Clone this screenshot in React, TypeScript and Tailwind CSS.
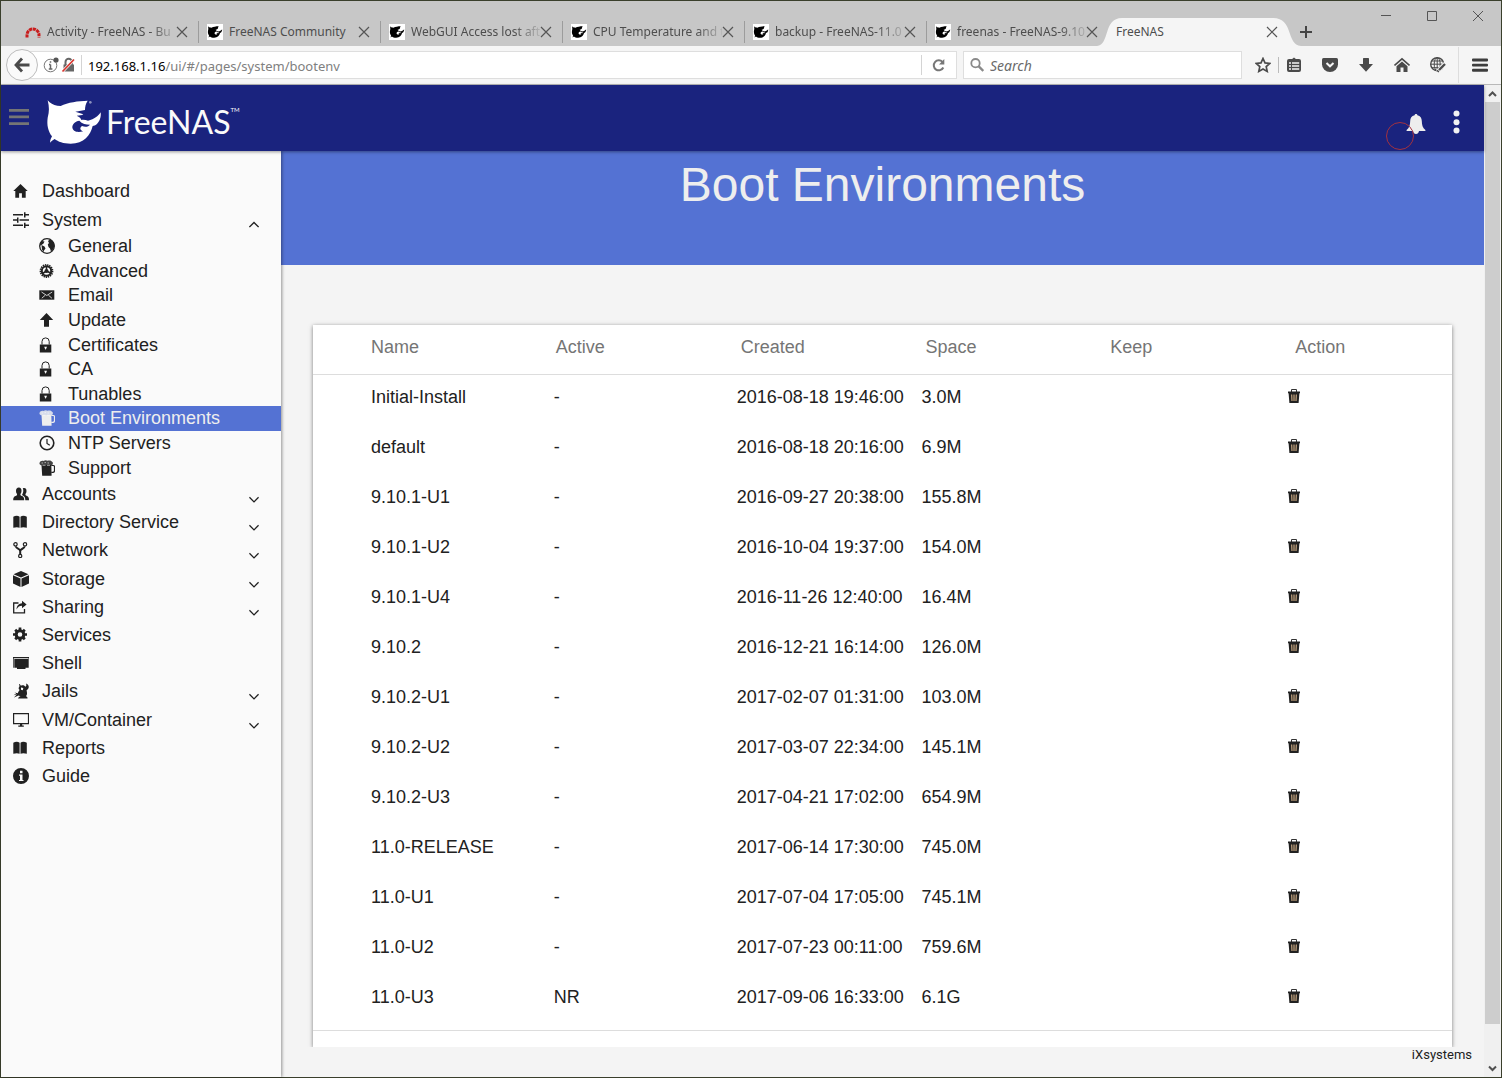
import { useState } from "react";
import type { ReactNode } from "react";
import clsx from "clsx";

interface NavItem {
  label: string;
  icon: ReactNode;
  expandable?: boolean;
}

interface BootEnv {
  name: string;
  active: string;
  created: string;
  space: string;
}

const SHARK =
  "M17 14C24 23 34 28 46 30L56 31C78 20 108 16 137 15C131 24 129 33 129 43L100 48C108 51 116 53 124 56C120 60 112 59 104 60C112 64 118 68 118 73C124 71 132 73 138 75C158 70 168 62 176 50C178 66 172 78 164 86C160 90 156 91 152 91C146 118 126 144 86 144C64 144 48 138 38 130C33 132 29 137 24 141C25 132 27 128 30 122C18 106 14 88 17 66C22 48 22 34 17 14ZM112 75C100 77 91 85 91 95C92 108 106 112 124 107C114 104 112 96 120 91C130 95 140 93 144 87C132 87 120 84 112 75Z";

function Icon({ children, className }: { children: ReactNode; className?: string }) {
  return (
    <svg viewBox="0 0 16 16" className={clsx("h-4 w-4 shrink-0", className)} fill="currentColor" aria-hidden="true">
      {children}
    </svg>
  );
}

const icons = {
  home: <path d="M7.5 1L.3 8h2v6.8h3.8v-4.600h2.800v4.600h3.800V8h2z" />,
  options: (
    <path d="M0 2h10v1.500H0zM11 .2h1.500v5.200H11zM12.300 2H16v1.500h-3.700zM0 7.300h4v1.500H0zM4 5.500h1.500v5.200H4zM6.500 7.300H16v1.500H6.500zM0 12.600h10v1.500H0zM11 10.800h1.500V16H11zM12.300 12.600H16v1.500h-3.700z" />
  ),
  globe: (
    <>
      <circle cx="8" cy="8" r="7.300" fill="none" stroke="currentColor" strokeWidth="1.300" />
      <path d="M1.500 4.500L3 3l2.500.5L4.500 5.500 2.500 7 1 7.500zM2.500 7l3 1.500 1 2L5 12.500l-.5 1.500L3 11.500zM9 3L11 1.200c3 1.300 4.600 4 4.500 6.800l-1.500 3.500L12 13.500l-1-3L9.500 9 8.800 6.500 10 5z" />
    </>
  ),
  advanced: (
    <>
      <circle cx="7.5" cy="8" r="6.100" fill="none" stroke="currentColor" strokeWidth="1.600" strokeDasharray="1.400 .8" />
      <circle cx="7.5" cy="8" r="4.700" fill="none" stroke="currentColor" strokeWidth="2" />
      <path d="M7.500 8V3.500M7.500 8l4 2M7.500 8l-4 2.500" stroke="currentColor" strokeWidth="1.500" />
      <circle cx="7.5" cy="8" r="2" />
    </>
  ),
  email: (
    <>
      <path d="M.3 3.300h15v9.400H.3z" />
      <path d="M2.500 5l5.300 3.500L13.200 5M2.800 11.200l3.500-3M12.900 11.200l-3.500-3" fill="none" stroke="#fafafa" strokeWidth=".8" />
    </>
  ),
  arrowUp: <path d="M7.500 1L14.200 8H10v6.800H5V8H.8z" />,
  lock: (
    <>
      <path d="M.8 7.500h11.500v8H.8z" />
      <path d="M3 7.500V4.500a3.600 3.600 0 017.200 0v3" fill="none" stroke="currentColor" />
      <path d="M5.200 9.800h2.800L6.900 12.500h-.6z" fill="#fafafa" />
    </>
  ),
  beer: (
    <>
      <path d="M2.500 5h9.800l.3 10.700H3.200z" />
      <path d="M.5 3C1 .8 3.500.3 4.500 1 6 0 7.500.2 8.500.8c1.500-.8 3.800-.4 4.300.8 1.700.5 1.300 2.700.2 3.700H2C.8 4.800.3 4 .5 3z" fillOpacity=".85" />
      <path d="M2.500 3h1.500M5.500 2.600h1.500M8.500 3h1.500M3.500 5.300h3M8 5.300h3" stroke="#fafafa" strokeWidth=".6" />
      <path d="M12.300 5.500h2q1.200 0 1.200 1.200v3.800q0 1.800-1.800 1.800h-1.400" fill="none" stroke="currentColor" strokeWidth="1.200" />
    </>
  ),
  clock: (
    <>
      <circle cx="8" cy="8" r="6.800" fill="none" stroke="currentColor" strokeWidth="1.600" />
      <path d="M8 4v4.500l2.800 1.800" fill="none" stroke="currentColor" strokeWidth="1.200" />
    </>
  ),
  people: (
    <path d="M5.800 1.500c1.900 0 2.800 1.400 2.700 3.200 0 1.500-.5 2.500-1 3.200-.3 1.200.2 1.700 1.500 2.200 1.700.7 2.200 1.600 2.200 4.100H.2c0-2.500.6-3.400 2.300-4.100 1.200-.5 1.800-1 1.500-2.200-.6-.7-1-1.700-1-3.200 0-1.800 1-3.200 2.800-3.200zM10.800 2c1.700-.2 2.800 1 2.700 3 0 1.300-.4 2.300-1 2.900-.3 1 .3 1.500 1.400 2 1.600.7 2.100 1.600 2.100 4.300h-3.700c0-2.500-.6-3.700-2.500-4.700-.6-.3-.8-.8-.5-1.300C10.300 7 10.700 4.200 9.800 2.300z" />
  ),
  book: (
    <path d="M.3 2.800C2.500 1.500 5 1.500 6.600 2.800v11c-1.500-.8-4-.8-6.300 0zM7.500 2.800c1.500-1.300 4-1.300 6.300 0v11c-2.200-.8-4.800-.8-6.300 0z" />
  ),
  fork: (
    <g fill="none" stroke="currentColor">
      <circle cx="2.500" cy="2.300" r="1.700" strokeWidth="1.200" />
      <circle cx="12" cy="2.300" r="1.700" strokeWidth="1.200" />
      <circle cx="7.200" cy="14" r="1.600" strokeWidth="1.200" />
      <path d="M2.800 4.300c.2 2.700 4.400 2.200 4.400 4.900v3M11.700 4.300c-.2 2.700-4.500 2.200-4.500 4.900" strokeWidth="2" />
    </g>
  ),
  cube: <path d="M8 0l7.500 3.200L8 6.400.5 3.200zM0 4.300l7.500 3.200V16L0 12.500zM16 4.300L8.500 7.500V16l7.500-3.500z" />,
  share: (
    <>
      <path d="M5.500 4H.7v9.900h10.800V10" fill="none" stroke="currentColor" strokeWidth="1.300" />
      <path d="M3.500 10.500C3.800 6.500 6 4.500 9 4.300V1.700l4.600 3.800L9 9.300V6.700c-2.500 0-4 1-5.500 3.800z" />
    </>
  ),
  gear: (
    <>
      <circle cx="7" cy="7.500" r="3.800" fill="none" stroke="currentColor" strokeWidth="3" />
      <path d="M7 .5v3M7 11.500v3M0 7.500h3M11 7.500h3M2.200 2.700l2 2M9.800 10.300l2 2M11.800 2.700l-2 2M4.200 10.300l-2 2" stroke="currentColor" strokeWidth="2.700" />
    </>
  ),
  shell: <path d="M0 2h17v1.200H0zM1.300 4h14v8.700H1.300zM4 12.500h8.500v1.400H4zM0 3h.7v9.700H0zM15.600 3h.4v9.700h-.4z" />,
  jails: (
    <path
      d="M6 1C7.500.5 7 3 8.500 2.500c1.500-.6 3 .2 3.600.9 1.600.3 1.300-1.700.9-2.900 2 .5 3.700 2.700 2.200 5.200L13.500 7.500c.8 2 .7 4.500-.5 5.500l1.500 1.500v1H5l.9-1.500 1.600-.8-2-.7L1 14.500l3-3.200-3.500 1 2.700-1.700L1.500 9.500l3.300.7C5.500 8.500 6 7.500 6.700 7 5.300 6 5.400 4.500 6.300 3.700 6.600 3 6.300 1.900 6 1zM8 4.500v2.200l1.800.5.500-2.200z"
      fillRule="evenodd"
    />
  ),
  monitor: (
    <>
      <path d="M.6 1.600h14.900v10H.6z" fill="none" stroke="currentColor" strokeWidth="1.200" />
      <path d="M7 11.500h2.200v2h1.600v1.300H5.300v-1.300H7z" />
    </>
  ),
  info: (
    <path d="M8 0a8 8 0 110 16A8 8 0 018 0zm-1 2.800v2.400h2.500V2.800zM6 6.500v1.200h1v4.200H6v1.200h4.500v-1.200h-1V6.500z" fillRule="evenodd" />
  ),
};

const topNav: NavItem[] = [
  { label: "Dashboard", icon: icons.home },
  { label: "System", icon: icons.options, expandable: true },
];

const systemNav: NavItem[] = [
  { label: "General", icon: icons.globe },
  { label: "Advanced", icon: icons.advanced },
  { label: "Email", icon: icons.email },
  { label: "Update", icon: icons.arrowUp },
  { label: "Certificates", icon: icons.lock },
  { label: "CA", icon: icons.lock },
  { label: "Tunables", icon: icons.lock },
  { label: "Boot Environments", icon: icons.beer },
  { label: "NTP Servers", icon: icons.clock },
  { label: "Support", icon: icons.beer },
];

const mainNav: NavItem[] = [
  { label: "Accounts", icon: icons.people, expandable: true },
  { label: "Directory Service", icon: icons.book, expandable: true },
  { label: "Network", icon: icons.fork, expandable: true },
  { label: "Storage", icon: icons.cube, expandable: true },
  { label: "Sharing", icon: icons.share, expandable: true },
  { label: "Services", icon: icons.gear },
  { label: "Shell", icon: icons.shell },
  { label: "Jails", icon: icons.jails, expandable: true },
  { label: "VM/Container", icon: icons.monitor, expandable: true },
  { label: "Reports", icon: icons.book },
  { label: "Guide", icon: icons.info },
];

const bootEnvs: BootEnv[] = [
  { name: "Initial-Install", active: "-", created: "2016-08-18 19:46:00", space: "3.0M" },
  { name: "default", active: "-", created: "2016-08-18 20:16:00", space: "6.9M" },
  { name: "9.10.1-U1", active: "-", created: "2016-09-27 20:38:00", space: "155.8M" },
  { name: "9.10.1-U2", active: "-", created: "2016-10-04 19:37:00", space: "154.0M" },
  { name: "9.10.1-U4", active: "-", created: "2016-11-26 12:40:00", space: "16.4M" },
  { name: "9.10.2", active: "-", created: "2016-12-21 16:14:00", space: "126.0M" },
  { name: "9.10.2-U1", active: "-", created: "2017-02-07 01:31:00", space: "103.0M" },
  { name: "9.10.2-U2", active: "-", created: "2017-03-07 22:34:00", space: "145.1M" },
  { name: "9.10.2-U3", active: "-", created: "2017-04-21 17:02:00", space: "654.9M" },
  { name: "11.0-RELEASE", active: "-", created: "2017-06-14 17:30:00", space: "745.0M" },
  { name: "11.0-U1", active: "-", created: "2017-07-04 17:05:00", space: "745.1M" },
  { name: "11.0-U2", active: "-", created: "2017-07-23 00:11:00", space: "759.6M" },
  { name: "11.0-U3", active: "NR", created: "2017-09-06 16:33:00", space: "6.1G" },
];

const tabs = [
  "Activity - FreeNAS - Bu",
  "FreeNAS Community",
  "WebGUI Access lost aft",
  "CPU Temperature and t",
  "backup - FreeNAS-11.0",
  "freenas - FreeNAS-9.10",
];

function CloseIcon() {
  return (
    <svg viewBox="0 0 12 12" className="h-3 w-3" stroke="#555" strokeWidth="1.2" aria-hidden="true">
      <path d="M1 1l10 10M11 1L1 11" />
    </svg>
  );
}

function TabBar() {
  return (
    <div className="flex h-[45px] items-end bg-[#c7c7c7] pl-4 text-xs text-[#4d4d4d]">
      {tabs.map((title, i) => (
        <div key={title} className="flex h-7 w-[182px] items-center pl-2">
          {i === 0 ? (
            <svg viewBox="0 0 16 16" className="h-4 w-4 shrink-0" aria-hidden="true">
              <path d="M2 13.500V11a6 6 0 0112 0v2.500" fill="none" stroke="#c91d1d" strokeWidth="3" strokeDasharray="3.200 .6" />
            </svg>
          ) : (
            <svg viewBox="6 0 180 160" className="h-4 w-4 shrink-0 bg-white" aria-hidden="true">
              <path d={SHARK} fillRule="evenodd" />
            </svg>
          )}
          <a
            href="#tab"
            className={clsx(
              "ml-1.5 min-w-0 flex-1 whitespace-nowrap",
              i !== 1 && "[mask-image:linear-gradient(to_right,black_80%,rgba(0,0,0,0.15))]",
            )}
          >
            {title}
          </a>
          <button aria-label={`Close ${title}`}>
            <CloseIcon />
          </button>
          <span className={clsx("ml-2.5 h-[22px] w-px", i < 5 && "bg-[#9c9c9c]")} />
        </div>
      ))}
      <div className="relative flex h-7 w-[182px] items-center justify-between pl-[7px] pr-[13px]">
        <svg
          viewBox="0 0 204 28"
          preserveAspectRatio="none"
          className="absolute -left-3 bottom-0 h-7 w-[204px]"
          fill="#f5f5f5"
          aria-hidden="true"
        >
          <path d="M0 28C13 27 6 0 25 0H176C197 0 189 27 204 28Z" />
        </svg>
        <a href="#tab" className="relative">
          FreeNAS
        </a>
        <button aria-label="Close FreeNAS" className="relative">
          <CloseIcon />
        </button>
      </div>
      <button aria-label="New tab" className="flex h-7 items-center pl-2">
        <svg viewBox="0 0 14 14" className="h-3.5 w-3.5" stroke="#444" strokeWidth="2" aria-hidden="true">
          <path d="M1 7h12M7 1v12" />
        </svg>
      </button>
      <div className="mb-6 ml-auto flex gap-9 pr-[18px] text-[#555]">
        {["M0 5.500h10", "M.5 1.500h9v9h-9z", "M0 1l10 10M10 1L0 11"].map((d, i) => (
          <button key={d} aria-label={["Minimize", "Maximize", "Close window"][i]}>
            <svg viewBox="0 0 10 12" className="h-3 w-2.5" fill="none" stroke="currentColor" aria-hidden="true">
              <path d={d} />
            </svg>
          </button>
        ))}
      </div>
    </div>
  );
}

function Toolbar() {
  return (
    <div className="flex h-[39px] items-center border-b border-[#b8b8b8] bg-[#f5f5f5] text-[#4a4a4a]">
      <button
        aria-label="Back"
        className="z-10 ml-[5px] flex h-8 w-8 shrink-0 items-center justify-center rounded-full border border-[#bdbdbd] bg-[#fafafa]"
      >
        <svg viewBox="0 0 16 16" className="h-4 w-4" fill="none" stroke="currentColor" strokeWidth="2.8" aria-hidden="true">
          <path d="M8 1.500L2 8l6 6.500M2.500 8H15.500" />
        </svg>
      </button>
      <div className="-ml-3 flex h-7 flex-1 items-center border border-[#dedede] bg-white pl-4">
        <svg viewBox="0 0 34 16" className="h-4 w-[34px] shrink-0" fill="none" aria-hidden="true">
          <circle cx="7.500" cy="8.500" r="6.300" stroke="#777" />
          <path d="M7.500 7.500v4.500M5.800 12h3.600M6 7.500h1.500M7.500 4.300v1.500" stroke="#666" strokeWidth="1.500" />
          <circle cx="13" cy="3" r="2.600" fill="#555" />
          <path d="M20.500 7.500h10.500v7H20.500z" fill="#666" />
          <path d="M22.500 8V5a3.200 3.200 0 016.400 0v3" stroke="#666" strokeWidth="2" />
          <path d="M19.500 14.500L31 2.500" stroke="#fff" strokeWidth="3" />
          <path d="M19.500 14.500L31 2.500" stroke="#d7362f" strokeWidth="1.800" />
        </svg>
        <span className="ml-1 h-5 w-px bg-[#d4d4d4]" />
        <label className="sr-only" htmlFor="url">
          Address
        </label>
        <div className="relative ml-1.5 flex-1 pt-px text-[13px]">
          <input id="url" defaultValue="192.168.1.16/ui/#/pages/system/bootenv" className="w-full text-transparent outline-none" />
          <span className="pointer-events-none absolute inset-0 pt-0.5 text-[#808080]" aria-hidden="true">
            <span className="text-black">192.168.1.16</span>/ui/#/pages/system/bootenv
          </span>
        </div>
        <span className="h-5 w-px bg-[#d4d4d4]" />
        <button aria-label="Reload" className="px-2.5">
          <svg viewBox="0 0 14 14" className="h-3.5 w-3.5" fill="none" stroke="#777" strokeWidth="2" aria-hidden="true">
            <path d="M11.300 9.500A5 5 0 1110.500 4" />
            <path d="M12.300 1v5.500H7z" fill="#777" stroke="none" />
          </svg>
        </button>
      </div>
      <div className="ml-1.5 flex h-7 w-[279px] items-center border border-[#dedede] bg-white px-1.5">
        <svg viewBox="0 0 14 14" className="h-3.5 w-3.5 shrink-0" fill="none" stroke="#8a8a8a" strokeWidth="1.8" aria-hidden="true">
          <circle cx="5.500" cy="5.200" r="4.200" />
          <path d="M8.500 8.200L13.300 13" strokeWidth="2.4" />
        </svg>
        <input
          aria-label="Search"
          placeholder="Search"
          className="ml-1.5 w-full pt-0.5 text-sm italic outline-none placeholder:text-[#6b6b6b]"
        />
      </div>
      <div className="flex items-center pl-3">
        <button aria-label="Bookmark" className="px-px">
          <Icon>
            <path d="M8 1.500l2 4.400 4.800.5-3.600 3.200 1 4.800L8 12l-4.200 2.400 1-4.800L1.200 6.400 6 5.900z" fill="none" stroke="currentColor" strokeWidth="1.700" />
          </Icon>
        </button>
        <span className="mx-1.5 h-4 w-px bg-[#bbb]" />
      </div>
      <div className="flex gap-5 pl-px">
        <button aria-label="Bookmarks list">
          <Icon>
            <path d="M5.500 2.500L8 .5l2.500 2zM3 2h10q2 0 2 2v9q0 2-2 2H3q-2 0-2-2V4q0-2 2-2z" />
            <path d="M3 5.200h2v1.600H3zM6 5.200h7.200v1.600H6zM3 8.200h2v1.600H3zM6 8.200h7.200v1.600H6zM3 11.200h2v1.600H3zM6 11.200h7.200v1.600H6z" fill="#f5f5f5" />
          </Icon>
        </button>
        <button aria-label="Pocket">
          <Icon>
            <path d="M1.500 1h13Q16 1 16 2.500v5a8 7.500 0 01-16 0v-5Q0 1 1.500 1z" />
            <path d="M4.500 6L8 9.300 11.500 6" fill="none" stroke="#f5f5f5" strokeWidth="2" />
          </Icon>
        </button>
        <button aria-label="Downloads">
          <Icon>
            <path d="M5 1.700Q5 1 5.700 1h4.600q.7 0 .7.700V7h4L8 14.800 1 7h4z" />
          </Icon>
        </button>
        <button aria-label="Home">
          <Icon>
            <path d="M.5 8.500L8 1.800l7.500 6.700" fill="none" stroke="currentColor" strokeWidth="1.600" />
            <path d="M8 4.500l5.500 4.800V15h-4v-4.500h-3V15h-4V9.300z" />
          </Icon>
        </button>
        <button aria-label="Web tools">
          <Icon>
            <g fill="none" stroke="currentColor">
              <circle cx="7.200" cy="7.200" r="6.500" strokeWidth="1.400" />
              <ellipse cx="7.200" cy="7.200" rx="3" ry="6.500" />
              <path d="M7.200 1v13M1 7.200h12.500M2 4h10.500M2 10.700h10.500" />
              <path d="M15 6.500l-7.500 8" stroke="#f5f5f5" strokeWidth="4" />
              <path d="M15 7l-6 6M7.500 14.700l1-1" strokeWidth="2.400" />
            </g>
          </Icon>
        </button>
      </div>
      <button aria-label="Menu" className="ml-3 flex h-9 items-center border-l border-[#ddd] px-[13px]">
        <Icon className="text-[#3d3d3d]">
          <path d="M1 1.500h14q1 0 1 1v1q0 1-1 1H1q-1 0-1-1v-1q0-1 1-1zM1 6.700h14q1 0 1 1v.8q0 1-1 1H1q-1 0-1-1v-.8q0-1 1-1zM1 11.700h14q1 0 1 1v1q0 1-1 1H1q-1 0-1-1v-1q0-1 1-1z" />
        </Icon>
      </button>
    </div>
  );
}

function AppHeader() {
  return (
    <header className="relative z-20 flex h-[66px] items-center bg-[#1a237e] pl-2 shadow-[0_1px_3px_rgba(0,0,0,0.4)]">
      <button aria-label="Toggle menu" className="mr-[17px]">
        <svg viewBox="0 0 20 18" className="mb-0.5 h-[18px] w-5" fill="#757575" aria-hidden="true">
          <path d="M0 1h20v2.800H0zM0 7.500h20v2.800H0zM0 14.200h20V17H0z" />
        </svg>
      </button>
      <a href="#home" className="flex items-center text-[#fafafa]" aria-label="FreeNAS home">
        <svg viewBox="12 10 168 138" className="mt-2 h-[46px] w-14 shrink-0" fill="#fff" aria-hidden="true">
          <path d={SHARK} fillRule="evenodd" />
          <circle cx="145" cy="20" r="4" fillOpacity=".5" />
        </svg>
        <span className="ml-1 mt-2 font-[Lato] text-[32px] leading-10">FreeNAS</span>
        <span className="mb-4 font-[Lato] text-[6px] leading-3">TM</span>
      </a>
      <button aria-label="Notifications" className="relative ml-auto mt-3">
        <svg viewBox="0 0 20 20" className="h-5 w-5" fill="#eee" aria-hidden="true">
          <path d="M10 0c1 0 1.300.6 1.400 1.300C14.500 2 15.700 4 15.800 7c.1 4 .8 7 3.600 9v1H.6v-1c2.800-2 3.500-5 3.600-9 .1-3 1.300-5 4.400-5.700C8.700.6 9 0 10 0zM7 17h6c-.3 2-1.500 3-3 3s-2.700-1-3-3z" />
        </svg>
        <svg viewBox="0 0 28 28" className="absolute -left-5 top-2 h-7 w-7" fill="none" stroke="#a3323f" aria-hidden="true">
          <circle cx="14" cy="14" r="13.500" />
        </svg>
      </button>
      <button aria-label="More" className="ml-[26px] mr-6 mt-2">
        <svg viewBox="0 0 8 24" className="h-6 w-2" fill="#f2f2f2" aria-hidden="true">
          <circle cx="4.500" cy="3.500" r="3" />
          <circle cx="4.500" cy="12.300" r="3" />
          <circle cx="4.500" cy="20.500" r="3" />
        </svg>
      </button>
    </header>
  );
}

function NavRow({ item, open }: { item: NavItem; open?: boolean }) {
  return (
    <li className="flex">
      <a href="#nav" className="flex w-full items-center pl-3 pr-[22px]">
        <Icon>{item.icon}</Icon>
        <span className="ml-[13px] flex-1">{item.label}</span>
        {item.expandable && (
          <svg viewBox="0 0 12 8" className="mt-2.5 h-2 w-2.5" fill="none" stroke="currentColor" strokeWidth="1.600" aria-hidden="true">
            <path d={open ? "M.5 6.500L6 1l5.500 5.500" : "M.5 2L6 7.500 11.500 2"} />
          </svg>
        )}
      </a>
    </li>
  );
}

function Sidebar() {
  const [selected, setSelected] = useState("Boot Environments");

  return (
    <nav className="relative z-10 w-[280px] shrink-0 bg-[#fafafa] pt-[26px] text-lg leading-6 text-[#212121] shadow-[1px_0_3px_rgba(0,0,0,0.4)]">
      <ul className="grid h-[57px] auto-rows-fr">
        {topNav.map((item) => (
          <NavRow key={item.label} item={item} open />
        ))}
      </ul>
      <ul className="grid h-[246px] auto-rows-fr">
        {systemNav.map((item) => (
          <li key={item.label} className="flex">
            <a
              href="#nav"
              onClick={() => setSelected(item.label)}
              className={clsx(
                "flex w-full items-center pl-[38px]",
                item.label === selected && "bg-[#5472d3] text-[#eee]",
              )}
            >
              <Icon>{item.icon}</Icon>
              <span className="ml-[13px]">{item.label}</span>
            </a>
          </li>
        ))}
      </ul>
      <ul className="grid h-[310px] auto-rows-fr">
        {mainNav.map((item) => (
          <NavRow key={item.label} item={item} />
        ))}
      </ul>
    </nav>
  );
}

function BootEnvTable() {
  return (
    <div className="border-b border-[#ddd] pb-[5px]">
      <table className="w-full table-fixed border-separate border-spacing-0 text-left text-lg leading-6 text-[#212121]">
        <colgroup>
          <col className="w-[30px]" />
        </colgroup>
        <thead>
          <tr className="h-[50px] align-top text-[#757575]">
            <td className="border-b border-[#ddd]" />
            {["Name", "Active", "Created", "Space", "Keep", "Action"].map((heading) => (
              <th key={heading} scope="col" className="border-b border-[#ddd] pl-7 pt-2.5 font-normal">
                {heading}
              </th>
            ))}
          </tr>
        </thead>
        <tbody>
          {bootEnvs.map((env) => (
            <tr key={env.name} className="h-[50px] align-top">
              <td />
              <td className="pl-7 pt-2.5">{env.name}</td>
              <td className="pl-[26px] pt-2.5">{env.active}</td>
              <td className="whitespace-nowrap pl-6 pt-2.5">{env.created}</td>
              <td className="pl-6 pt-2.5">{env.space}</td>
              <td />
              <td className="pl-5 pt-2.5">
                <button aria-label={`Delete ${env.name}`} className="flex pt-[3px]">
                  <svg viewBox="0 0 14 16" className="h-4 w-3.5" aria-hidden="true">
                    <path d="M4.500 4V1.500h5V4" fill="none" stroke="#333" />
                    <path d="M1 3.500h12v1.800h-.6l-.8 9.700H2.400l-.8-9.700H1z" fill="#212121" />
                    <path d="M4.700 6.500l.3 6.500M7 6.500V13M9.300 6.500L9 13" stroke="#d8b48a" strokeWidth="1.100" />
                  </svg>
                </button>
              </td>
            </tr>
          ))}
        </tbody>
      </table>
    </div>
  );
}

function Scrollbar() {
  return (
    <div className="flex w-[17px] shrink-0 flex-col bg-[#f0f0f0] px-px" aria-hidden="true">
      <svg viewBox="0 0 15 17" className="h-[17px]" fill="none" stroke="#505050" strokeWidth="2">
        <path d="M4 11l3.500-3.500L11 11" />
      </svg>
      <div className="flex-1 bg-[#cdcdcd]" />
      <div className="h-9" />
      <svg viewBox="0 0 15 17" className="h-[17px]" fill="none" stroke="#505050" strokeWidth="2">
        <path d="M4 6.500L7.500 10 11 6.500" />
      </svg>
    </div>
  );
}

export default function App() {
  return (
    <div className="flex min-h-screen flex-col border border-[#3a3f2c] font-['Noto_Sans',sans-serif]">
      <TabBar />
      <Toolbar />
      <div className="flex flex-1">
        <div className="flex min-w-0 flex-1 flex-col bg-[#f4f4f4] font-['Liberation_Sans',Arial,sans-serif]">
          <AppHeader />
          <div className="flex flex-1">
            <Sidebar />
            <main className="flex min-w-0 flex-1 flex-col">
              <div className="h-[114px] bg-[#5472d3] pt-[5px] text-center">
                <h1 className="text-5xl leading-[58px] text-[#eee]">Boot Environments</h1>
              </div>
              <div className="flex flex-1 flex-col overflow-hidden px-8 pt-[60px]">
                <div className="flex-1 bg-white shadow-[0_1px_4px_rgba(0,0,0,0.5)]">
                  <BootEnvTable />
                </div>
              </div>
              <footer className="flex h-[30px] justify-end pr-3 font-[Roboto] text-[13px] leading-4 text-[#212121]">
                iXsystems
              </footer>
            </main>
          </div>
        </div>
        <Scrollbar />
      </div>
    </div>
  );
}
